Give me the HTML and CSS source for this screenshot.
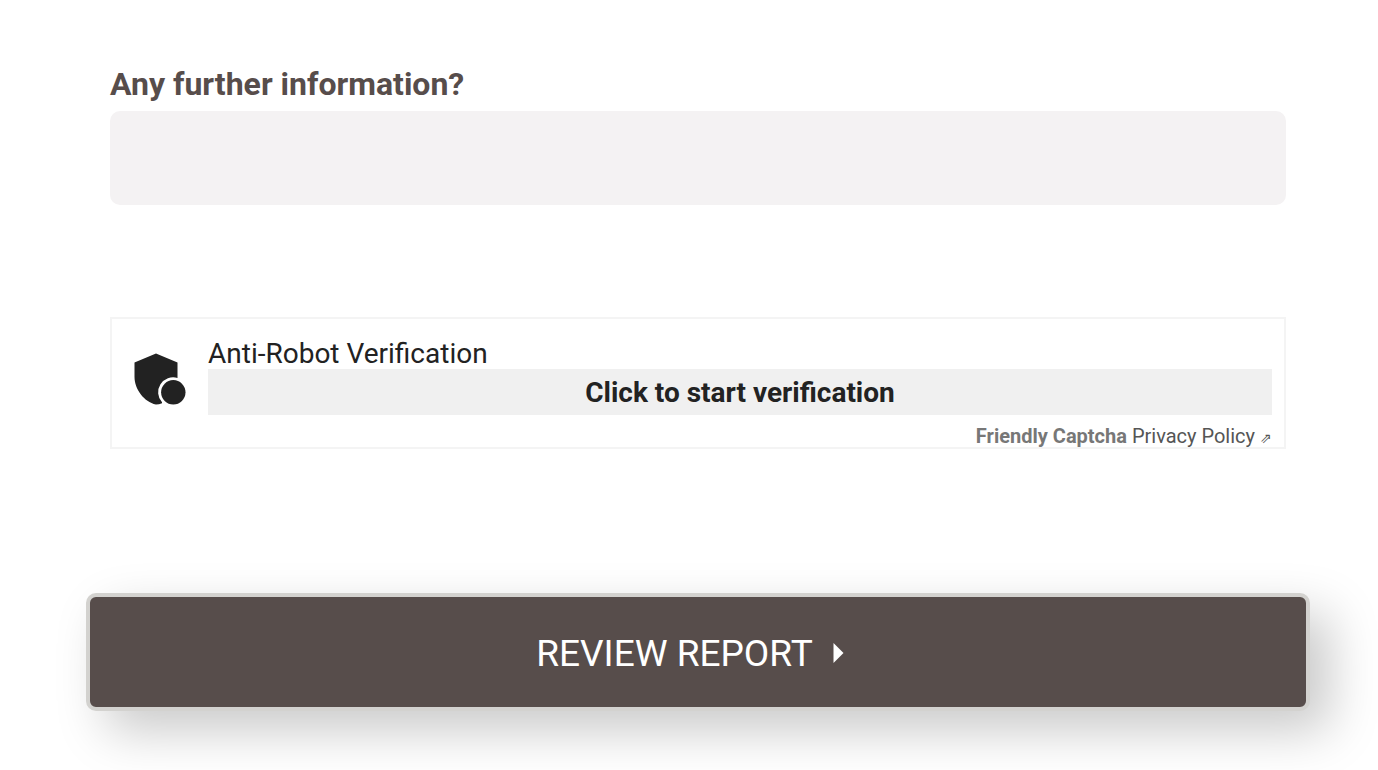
FILE: index.html
```
<!DOCTYPE html>
<html lang="en">
<head>
    <meta charset="UTF-8">
    <meta name="viewport" content="width=device-width, initial-scale=1.0">
    <title>Report</title>
    <link rel="stylesheet" href="styles.css">
</head>
<body>
    <form class="report-form">
        <div class="form-group">
            <label for="furtherInfo">Any further information?</label>
            <textarea id="furtherInfo" name="furtherInfo"></textarea>
        </div>

        <div class="captcha">
            <svg class="captcha-icon" viewBox="0 0 52 52" aria-hidden="true">
                <path d="M22 0.5 L43.5 9.5 V24.9 A15 15 0 0 0 28 49.3 L28 50.3 Q25 51.5 22 51.5 C10 49 0.5 36 0.5 24 V9.5 Z"/>
                <circle cx="39.3" cy="39.3" r="12.2"/>
            </svg>
            <div class="captcha-content">
                <span class="captcha-text">Anti-Robot Verification</span>
                <button type="button" class="captcha-button">Click to start verification</button>
                <div class="captcha-banner">
                    <a href="#" class="captcha-brand">Friendly Captcha</a>
                    <a href="#" class="captcha-policy">Privacy Policy <small>⇗</small></a>
                </div>
            </div>
        </div>

        <button type="submit" class="review-button">
            REVIEW REPORT
            <svg class="arrow" viewBox="0 0 11 20" aria-hidden="true"><path d="M0.5 0 L10.5 10 L0.5 20 Z"/></svg>
        </button>
    </form>
</body>
</html>
```
FILE: styles.css
```
body {
    margin: 0;
    background-color: #fff;
    font-family: Roboto, Arial, sans-serif;
    color: #222;
}
.report-form {
    display: flex;
    flex-direction: column;
    padding: 64px 68px 59px 86px;
}
.form-group {
    display: flex;
    flex-direction: column;
    gap: 7px;
    margin: 0 24px;
}
label {
    font-size: 32px;
    font-weight: bold;
    line-height: 40px;
    color: #574d4b;
}
textarea {
    height: 94px;
    padding: 16px;
    border: none;
    border-radius: 10px;
    box-sizing: border-box;
    background-color: #f4f2f3;
    font: inherit;
    font-size: 28px;
    resize: none;
}
.captcha {
    display: flex;
    align-items: flex-start;
    gap: 22px;
    height: 132px;
    margin: 112px 24px 0;
    padding: 20px 12px 0 22px;
    border: 2px solid #f4f4f4;
    box-sizing: border-box;
}
.captcha-icon {
    flex: none;
    width: 52px;
    height: 52px;
    margin-top: 14px;
    fill: #222;
}
.captcha-content {
    flex: 1;
    display: flex;
    flex-direction: column;
}
.captcha-text {
    font-size: 28px;
    line-height: 30px;
}
.captcha-button {
    height: 46px;
    padding: 0;
    border: none;
    background-color: #f0f0f0;
    color: #222;
    font: inherit;
    font-size: 28px;
    font-weight: bold;
    cursor: pointer;
}
.captcha-banner {
    margin-top: 9px;
    text-align: right;
    font-size: 20px;
    line-height: 24px;
}
.captcha-banner a {
    text-decoration: none;
}
.captcha-brand {
    color: #777;
    font-weight: bold;
}
.captcha-policy {
    color: #555;
}
.captcha-policy small {
    font-size: 14px;
}
.review-button {
    display: flex;
    align-items: center;
    justify-content: center;
    gap: 20px;
    height: 118px;
    margin-top: 144px;
    padding: 2px 16px 0 0;
    border: 4px solid #d3d2cf;
    border-radius: 10px;
    background-color: #574d4b;
    box-shadow: 20px 20px 50px rgba(0,0,0,0.21);
    color: #fff;
    font: inherit;
    font-size: 37px;
    cursor: pointer;
}
.arrow {
    width: 11px;
    height: 20px;
    fill: #fff;
}
```
